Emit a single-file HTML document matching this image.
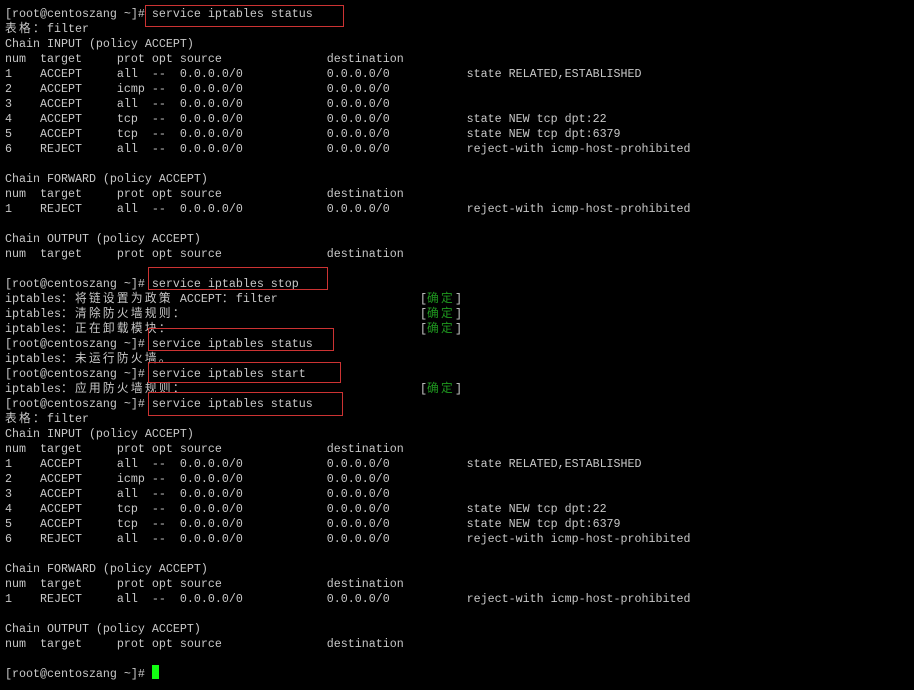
<!DOCTYPE html>
<html><head><meta charset="utf-8"><style>
html,body{margin:0;padding:0;background:#000;width:914px;height:690px;overflow:hidden}
.t{position:absolute;left:5px;top:7px;font-family:"Liberation Mono","Noto Sans CJK SC",monospace;font-size:11.67px;line-height:15px;color:#c8c8c8;white-space:pre;margin:0}
.c{letter-spacing:2.33px}
.g{color:#1f9a1f}
.k{position:absolute;left:420px;font-family:"Liberation Mono","Noto Sans CJK SC",monospace;font-size:11.67px;line-height:15px;color:#c8c8c8;white-space:pre}
.b{position:absolute;border:1px solid #c33;}
.cur{position:absolute;left:152px;top:665px;width:7px;height:14px;background:#1f1}
</style></head><body>
<pre class="t">[root@centoszang ~]# service iptables status
<span class="c">表格：</span>filter
Chain INPUT (policy ACCEPT)
num  target     prot opt source               destination         
1    ACCEPT     all  --  0.0.0.0/0            0.0.0.0/0           state RELATED,ESTABLISHED 
2    ACCEPT     icmp --  0.0.0.0/0            0.0.0.0/0           
3    ACCEPT     all  --  0.0.0.0/0            0.0.0.0/0           
4    ACCEPT     tcp  --  0.0.0.0/0            0.0.0.0/0           state NEW tcp dpt:22 
5    ACCEPT     tcp  --  0.0.0.0/0            0.0.0.0/0           state NEW tcp dpt:6379 
6    REJECT     all  --  0.0.0.0/0            0.0.0.0/0           reject-with icmp-host-prohibited 

Chain FORWARD (policy ACCEPT)
num  target     prot opt source               destination         
1    REJECT     all  --  0.0.0.0/0            0.0.0.0/0           reject-with icmp-host-prohibited 

Chain OUTPUT (policy ACCEPT)
num  target     prot opt source               destination         

[root@centoszang ~]# service iptables stop
iptables<span class="c">：将链设置为政策</span> ACCEPT<span class="c">：</span>filter
iptables<span class="c">：清除防火墙规则：</span>
iptables<span class="c">：正在卸载模块：</span>
[root@centoszang ~]# service iptables status
iptables<span class="c">：未运行防火墙。</span>
[root@centoszang ~]# service iptables start
iptables<span class="c">：应用防火墙规则：</span>
[root@centoszang ~]# service iptables status
<span class="c">表格：</span>filter
Chain INPUT (policy ACCEPT)
num  target     prot opt source               destination         
1    ACCEPT     all  --  0.0.0.0/0            0.0.0.0/0           state RELATED,ESTABLISHED 
2    ACCEPT     icmp --  0.0.0.0/0            0.0.0.0/0           
3    ACCEPT     all  --  0.0.0.0/0            0.0.0.0/0           
4    ACCEPT     tcp  --  0.0.0.0/0            0.0.0.0/0           state NEW tcp dpt:22 
5    ACCEPT     tcp  --  0.0.0.0/0            0.0.0.0/0           state NEW tcp dpt:6379 
6    REJECT     all  --  0.0.0.0/0            0.0.0.0/0           reject-with icmp-host-prohibited 

Chain FORWARD (policy ACCEPT)
num  target     prot opt source               destination         
1    REJECT     all  --  0.0.0.0/0            0.0.0.0/0           reject-with icmp-host-prohibited 

Chain OUTPUT (policy ACCEPT)
num  target     prot opt source               destination         

[root@centoszang ~]# </pre>
<div class="k" style="top:292px">[<span class="g c">确定</span>]</div>
<div class="k" style="top:307px">[<span class="g c">确定</span>]</div>
<div class="k" style="top:322px">[<span class="g c">确定</span>]</div>
<div class="k" style="top:382px">[<span class="g c">确定</span>]</div>
<div class="b" style="left:145px;top:5px;width:197px;height:20px"></div>
<div class="b" style="left:148px;top:267px;width:178px;height:21px"></div>
<div class="b" style="left:148px;top:328px;width:184px;height:21px"></div>
<div class="b" style="left:148px;top:362px;width:191px;height:19px"></div>
<div class="b" style="left:148px;top:392px;width:193px;height:22px"></div>
<div class="cur"></div>
</body></html>
